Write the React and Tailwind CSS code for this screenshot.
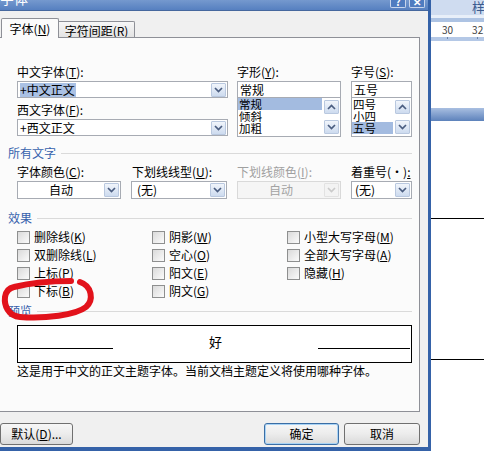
import React from 'react'

const Chev = ({ up, color = '#4a5d80' }) => (
  <svg width="9" height="6" viewBox="0 0 9 6">
    <path d={up ? 'M1 5L4.5 1.5L8 5' : 'M1 1L4.5 4.5L8 1'} fill="none" stroke={color} strokeWidth="1.7" />
  </svg>
)

function ArrowBtn({ up, disabled }) {
  return (
    <div
      className={`w-[15px] h-[14px] flex items-center justify-center border rounded-[1px] ${
        disabled ? 'border-[#e2e2e2] bg-[#f3f3f3]' : 'border-[#b9c8df] bg-gradient-to-b from-[#f1f5fb] to-[#cddbef]'
      }`}
    >
      <Chev up={up} color={disabled ? '#cacaca' : '#4a5d80'} />
    </div>
  )
}

function Combo({ text, hl, center, pad = 'pl-[2px]', disabled, tall }) {
  return (
    <div
      className={`${tall ? 'h-[18px]' : 'h-[17px]'} flex items-center border pr-[1px] ${
        disabled ? 'border-[#d9d9d9] bg-[#f5f5f5] text-[#a3a3a3]' : 'border-[#a7abb3] bg-white'
      }`}
    >
      <div className={`flex-1 flex ${center ? 'justify-center' : pad} leading-[14px]`}>
        <span className={hl ? 'bg-[#aac1e4] pr-[1px]' : ''}>{text}</span>
      </div>
      <ArrowBtn disabled={disabled} />
    </div>
  )
}

function ListBox({ items, sel }) {
  return (
    <div className="h-[39px] border-x border-b border-[#a7abb3] bg-white flex">
      <div className="flex-1 flex flex-col pr-[2px]">
        {items.map((t, i) => (
          <div
            key={t}
            className={`h-[12px] text-[11.5px] leading-[12px] pl-[1px] ${i === sel ? 'bg-[#a3bbe0]' : ''}`}
          >
            {t}
          </div>
        ))}
      </div>
      <div className="flex flex-col justify-between py-[2px] pr-[1px]">
        <ArrowBtn up />
        <ArrowBtn />
      </div>
    </div>
  )
}

function Section({ title }) {
  return (
    <div className="h-[16px] -ml-[9px] flex items-center text-[#3762ad]">
      <span className="leading-[16px]">{title}</span>
      <div className="flex-1 h-px bg-[#dadada] ml-[5px]" />
    </div>
  )
}

function Check({ label, k }) {
  return (
    <div className="h-[18px] flex items-center">
      <div className="w-[13px] h-[13px] border border-[#8e8f8f] bg-gradient-to-br from-[#dadada] to-[#fbfbfb]" />
      <span className="ml-[4px] leading-[16px]">
        {label}(<span className="underline">{k}</span>)
      </span>
    </div>
  )
}

function Label({ t, k, disabled }) {
  return (
    <div className={`h-[16px] leading-[16px] ${disabled ? 'text-[#a0a0a0]' : ''}`}>
      {t}(<span className="underline">{k}</span>):
    </div>
  )
}

function Btn({ children, className }) {
  return (
    <div
      className={`h-[22px] flex items-center justify-center border rounded-[3px] bg-gradient-to-b from-[#f7f7f7] via-[#ececec] to-[#dadada] ${className}`}
    >
      {children}
    </div>
  )
}

export default function App() {
  return (
    <div className="relative w-[484px] h-[451px] overflow-hidden flex bg-white text-[12px] text-black font-['Noto_Sans_CJK_SC','Noto_Sans',sans-serif]">
      {/* dialog */}
      <div className="w-[431px] h-full flex flex-col border-r-[3px] border-b-[4px] border-[#3562a8] bg-[#f0f0f0]">
        {/* title bar */}
        <div className="h-[11px] flex items-start overflow-hidden bg-gradient-to-b from-[#7599ce] to-[#5680c0] border-b border-[#46689e]">
          <span className="-mt-[11px] text-white text-[14px] leading-[18px]">字体</span>
          <div className="flex-1" />
          <div className="mr-[3px] flex gap-[3px]">
            <div className="w-[16px] h-[8px] border-x border-b border-[#c8d6ec] bg-[#4f7cc0] rounded-b-[2px] flex items-end justify-center overflow-hidden text-white text-[10px] font-bold leading-[10px]">
              ?
            </div>
            <div className="w-[16px] h-[8px] border-x border-b border-[#c8d6ec] bg-[#4f7cc0] rounded-b-[2px] flex items-end justify-center overflow-hidden text-white text-[10px] font-bold leading-[10px]">
              ✕
            </div>
          </div>
        </div>

        {/* tabs */}
        <div className="flex items-end pt-[7px] pl-[1px]">
          <div className="relative z-10 w-[58px] h-[20px] -mb-px border border-b-0 border-[#8e9097] bg-[#fbfbfb] rounded-t-[2px] flex items-center justify-center">
            字体(<span className="underline">N</span>)
          </div>
          <div className="w-[76px] h-[16px] pt-[2px] border border-l-0 border-b-0 border-[#8e9097] rounded-tr-[2px] bg-gradient-to-b from-[#f7f7f7] to-[#e3e3e3] flex items-center justify-center">
            字符间距(<span className="underline">R</span>)
          </div>
        </div>

        {/* panel */}
        <div className="h-[375px] w-[420px] border-t border-r border-b border-[#8e9097] bg-[#fbfbfb] pl-[17px] pr-[7px] pt-[26px] flex flex-col">
          <div className="flex items-start">
            <div className="w-[211px] flex flex-col">
              <Label t="中文字体" k="T" />
              <div className="mt-[1px]">
                <Combo text="+中文正文" hl />
              </div>
              <div className="mt-[4px]">
                <Label t="西文字体" k="F" />
              </div>
              <div className="mt-[1px]">
                <Combo text="+西文正文" />
              </div>
            </div>
            <div className="ml-[9px] w-[104px] flex flex-col">
              <Label t="字形" k="Y" />
              <div className="mt-[1px] h-[17px] border border-[#a7abb3] bg-white pl-[2px] leading-[15px]">常规</div>
              <ListBox items={['常规', '倾斜', '加粗']} sel={0} />
            </div>
            <div className="ml-[10px] w-[61px] flex flex-col">
              <Label t="字号" k="S" />
              <div className="mt-[1px] h-[17px] border border-[#a7abb3] bg-white pl-[2px] leading-[15px]">五号</div>
              <ListBox items={['四号', '小四', '五号']} sel={2} />
            </div>
          </div>

          <div className="mt-[8px]">
            <Section title="所有文字" />
          </div>

          <div className="mt-[3px] flex items-start">
            <div className="w-[104px] flex flex-col">
              <Label t="字体颜色" k="C" />
              <div className="mt-[1px]">
                <Combo text="自动" center tall />
              </div>
            </div>
            <div className="ml-[10px] w-[96px] flex flex-col">
              <div className="pl-[1px]">
                <Label t="下划线线型" k="U" />
              </div>
              <div className="mt-[1px]">
                <Combo text="(无)" pad="pl-[5px]" tall />
              </div>
            </div>
            <div className="ml-[10px] w-[104px] flex flex-col">
              <Label t="下划线颜色" k="I" disabled />
              <div className="mt-[1px]">
                <Combo text="自动" center disabled tall />
              </div>
            </div>
            <div className="ml-[10px] w-[61px] flex flex-col">
              <div className="h-[16px] leading-[16px]">
                着重号(·)<span className="underline">:</span>
              </div>
              <div className="mt-[1px]">
                <Combo text="(无)" pad="pl-[3px]" tall />
              </div>
            </div>
          </div>

          <div className="mt-[11px]">
            <Section title="效果" />
          </div>

          <div className="mt-[2px] flex">
            <div className="w-[135px] flex flex-col">
              <Check label="删除线" k="K" />
              <Check label="双删除线" k="L" />
              <Check label="上标" k="P" />
              <Check label="下标" k="B" />
            </div>
            <div className="w-[135px] flex flex-col">
              <Check label="阴影" k="W" />
              <Check label="空心" k="O" />
              <Check label="阳文" k="E" />
              <Check label="阴文" k="G" />
            </div>
            <div className="flex-1 flex flex-col">
              <Check label="小型大写字母" k="M" />
              <Check label="全部大写字母" k="A" />
              <Check label="隐藏" k="H" />
            </div>
          </div>

          <div className="mt-[3px]">
            <Section title="预览" />
          </div>

          <div className="mt-[6px] h-[38px] border border-black bg-white flex items-start">
            <div className="ml-[1px] w-[94px] h-[23px] border-b border-black" />
            <div className="flex-1 flex justify-center pt-[8px] text-[13px] leading-[16px]">好</div>
            <div className="mr-[1px] w-[92px] h-[23px] border-b border-black" />
          </div>
          <div className="h-[16px] leading-[16px]">这是用于中文的正文主题字体。当前文档主题定义将使用哪种字体。</div>
        </div>

        {/* buttons */}
        <div className="mt-[11px] flex items-center pr-[8px]">
          <Btn className="w-[73px] border-[#707070]">
            默认(<span className="underline">D</span>)...
          </Btn>
          <div className="flex-1" />
          <Btn className="w-[75px] border-[#3b6ea5] shadow-[inset_0_0_0_1px_#a9d3f5]">确定</Btn>
          <Btn className="ml-[5px] w-[76px] border-[#707070]">取消</Btn>
        </div>
      </div>

      {/* document behind dialog */}
      <div className="flex-1 flex flex-col overflow-hidden">
        <div className="h-[15px] bg-[#cfdcf0] flex items-start pl-[41px] text-[13px] leading-[14px] text-[#3b5b8f] whitespace-nowrap">
          样式
        </div>
        <div className="h-[3px] bg-[#e8eff9]" />
        <div className="h-[4px] bg-[#adc3e3]" />
        <div className="h-[15px] bg-white flex items-center text-[10px] leading-[12px] text-[#404040] whitespace-nowrap">
          <span className="ml-[11px]">30</span>
          <span className="ml-[19px]">32</span>
        </div>
        <div className="h-[4px] bg-[#b4c8e6] flex items-start">
          <div className="ml-[16px] w-px h-[2px] bg-[#6f86aa]" />
          <div className="ml-[29px] w-px h-[2px] bg-[#6f86aa]" />
        </div>
        <div className="h-[67px] bg-white" />
        <div className="h-[13px] bg-gradient-to-b from-[#a9bfe1] to-[#5d82bb]" />
        <div className="mt-[97px] h-px bg-black" />
        <div className="mt-[140px] h-px bg-black" />
      </div>

      {/* red hand-drawn annotation */}
      <svg className="absolute inset-0 pointer-events-none" width="484" height="451" viewBox="0 0 484 451">
        <path
          d="M80 282 C92 286 94 300 86 307 C76 315 45 319 20 317 C8 316 4 305 5 297 C6 291 9 288 14 287 C30 283 55 281 71 281"
          fill="none"
          stroke="#e2121b"
          strokeWidth="6"
          strokeLinecap="round"
          strokeLinejoin="round"
        />
      </svg>
    </div>
  )
}
